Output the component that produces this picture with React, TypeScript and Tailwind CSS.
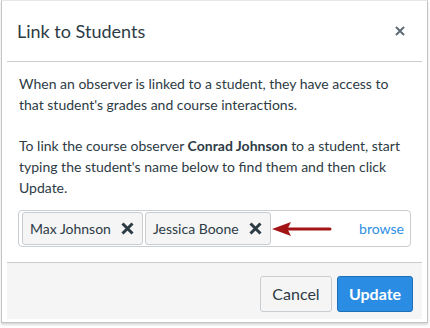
import React from "react";

function XThin() {
  return (
    <svg width="10" height="10" viewBox="0 0 10 10" className="block">
      <path d="M1 1 L9 9 M9 1 L1 9" stroke="#5f6b74" strokeWidth="2" strokeLinecap="butt" />
    </svg>
  );
}

function XBold() {
  return (
    <svg width="13" height="13" viewBox="0 0 13 13" className="block">
      <path d="M1.5 1.5 L11.5 11.5 M11.5 1.5 L1.5 11.5" stroke="#2d3b45" strokeWidth="3" strokeLinecap="butt" />
    </svg>
  );
}

function Chip({ name }: { name: string }) {
  return (
    <div className="flex h-[33px] items-center gap-[10px] rounded-[3px] border border-[#c7cdd1] bg-[#f5f5f5] pl-[7px] pr-[8px] text-[14px] text-[#2d3b45]">
      <span>{name}</span>
      <XBold />
    </div>
  );
}

export default function App() {
  return (
    <div className="relative h-[328px] w-[430px] bg-white font-['Lato','Noto_Sans',sans-serif] text-[#2d3b45]">
      <div className="ml-[1px] h-[323px] w-[427px] border border-[#c4c4c4] border-t-[#e6e6e6] px-[5px] shadow-[0_2px_2px_rgba(0,0,0,0.15)]">
        <div className="flex h-[61px] items-center justify-between border-b border-[#c7cdd1] pl-[10px] pr-[17px]">
          <h1 className="text-[18px] leading-none">Link to Students</h1>
          <XThin />
        </div>
        <div className="px-[11px] pt-[11px] pb-[15px] text-[14px] leading-[21px]">
          <p className="pl-[1px]">
            When an observer is linked to a student, they have access to that student's grades and course interactions.
          </p>
          <p className="mt-[20px] pl-[1px]">
            To link the course observer <span className="font-bold">Conrad Johnson</span> to a student, start typing the
            student's name below to find them and then click Update.
          </p>
          <div className="mt-[12px] flex h-[37px] items-center gap-[2px] rounded-[4px] border border-[#c7cdd1] bg-white pl-[3px] pr-[6px]">
            <Chip name="Max Johnson" />
            <Chip name="Jessica Boone" />
            <span className="ml-auto text-[14px] leading-none text-[#2d8fe3]">browse</span>
          </div>
        </div>
        <div className="flex h-[57px] justify-end gap-[5px] border-t border-[#c7cdd1] bg-[#f5f5f5] pt-[13px] pr-[9px]">
          <button className="h-[36px] w-[72px] rounded-[3px] border border-[#c7cdd1] bg-[#f5f5f5] text-[16px] text-[#2d3b45]">
            Cancel
          </button>
          <button className="h-[36px] w-[76px] rounded-[3px] border border-[#1f6fb8] bg-[#2b8ce3] text-[16px] font-bold text-white">
            Update
          </button>
        </div>
      </div>
      <svg className="absolute left-[270px] top-[221px]" width="62" height="16" viewBox="0 0 62 16">
        <path d="M60 8 L18 8" stroke="#a31515" strokeWidth="3" strokeLinecap="round" />
        <path d="M2 8 L21 1 L17.5 8 L21 15 Z" fill="#a31515" />
      </svg>
    </div>
  );
}
